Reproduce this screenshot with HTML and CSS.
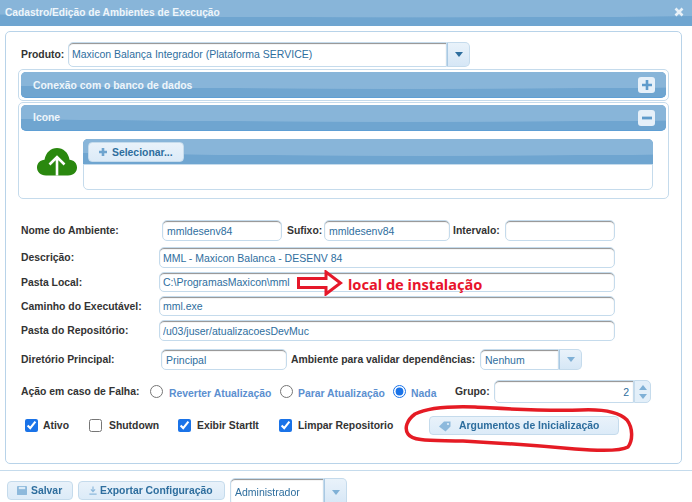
FILE: index.html
```html
<!DOCTYPE html>
<html lang="pt-BR">
<head>
<meta charset="utf-8">
<title>Cadastro/Edição de Ambientes de Execução</title>
<link rel="stylesheet" href="styles.css">
</head>
<body>
<div class="dialog">
  <header class="titlebar gloss">
    <span class="title">Cadastro/Edição de Ambientes de Execução</span>
    <svg class="close" width="10" height="10" viewBox="0 0 10 10"><path d="M1.5 1.5l7 7M8.5 1.5l-7 7" stroke="#e8f1f8" stroke-width="2.6"/></svg>
  </header>
  <main class="panel">
    <div class="row produto">
      <label class="lbl lbl-produto">Produto:</label>
      <div class="combo combo-produto">
        <input class="field" value="Maxicon Balança Integrador (Plataforma SERVICE)">
        <span class="combo-btn"><svg width="8" height="5" viewBox="0 0 8 5"><path d="M0 0h8L4 5z" fill="#2e6e9e"/></svg></span>
      </div>
    </div>

    <section class="accordion acc-closed">
      <div class="acc-head gloss">
        <span>Conexão com o banco de dados</span>
        <span class="acc-toggle"><svg width="10" height="10" viewBox="0 0 10 10"><path d="M5 0v10M0 5h10" stroke="#5f9bcb" stroke-width="2.6"/></svg></span>
      </div>
    </section>

    <section class="accordion acc-open">
      <div class="acc-head gloss">
        <span>Icone</span>
        <span class="acc-toggle"><svg width="10" height="10" viewBox="0 0 10 10"><path d="M0 5h10" stroke="#5f9bcb" stroke-width="2.8"/></svg></span>
      </div>
      <div class="upload-row">
        <svg class="cloud" width="42" height="29" viewBox="0 0 42 29"><path d="M10 28.500C4 28.500 1 24.500 1 20.500 1 16 4.500 13 8.500 12.800 9.500 5.500 15 1 21 1c6 0 11.500 4.500 12.500 11.800 4 .2 7.500 3.200 7.500 7.700 0 4-3 8-9 8z" fill="#2a880f"/><path d="M21 28.500V10.500M13.500 17.500L21 10l7.500 7.500" fill="none" stroke="#fff" stroke-width="2.600"/></svg>
        <div class="upload">
          <div class="upload-head gloss">
            <span class="btn btn-select"><svg width="10" height="10" viewBox="0 0 10 10"><path d="M5 1v8M1 5h8" stroke="#6ea4cf" stroke-width="2.6"/></svg>Selecionar...</span>
          </div>
          <div class="upload-body"></div>
        </div>
      </div>
    </section>

    <div class="row row-nome">
      <label class="lbl lbl-main">Nome do Ambiente:</label>
      <input class="field w-nome" value="mmldesenv84">
      <label class="lbl lbl-sufixo">Sufixo:</label>
      <input class="field w-sufixo" value="mmldesenv84">
      <label class="lbl lbl-intervalo">Intervalo:</label>
      <input class="field w-intervalo">
    </div>
    <div class="row row-desc">
      <label class="lbl lbl-wide">Descrição:</label>
      <input class="field w-full" value="MML - Maxicon Balanca - DESENV 84">
    </div>
    <div class="row row-thin">
      <label class="lbl lbl-wide">Pasta Local:</label>
      <input class="field w-full" value="C:\ProgramasMaxicon\mml">
    </div>
    <div class="row row-thin">
      <label class="lbl lbl-wide">Caminho do Executável:</label>
      <input class="field w-full" value="mml.exe">
    </div>
    <div class="row row-repo">
      <label class="lbl lbl-wide">Pasta do Repositório:</label>
      <input class="field w-full" value="/u03/juser/atualizacoesDevMuc">
    </div>
    <div class="row row-dir">
      <label class="lbl lbl-dir">Diretório Principal:</label>
      <input class="field w-dir" value="Principal">
      <label class="lbl lbl-dep">Ambiente para validar dependências:</label>
      <div class="combo combo-dep">
        <input class="field" value="Nenhum">
        <span class="combo-btn"><svg width="8" height="5" viewBox="0 0 8 5"><path d="M0 0h8L4 5z" fill="#7fb0d6"/></svg></span>
      </div>
    </div>
    <div class="row row-acao">
      <label class="lbl lbl-acao">Ação em caso de Falha:</label>
      <input class="radio" type="radio" name="acao">
      <span class="opt opt-rev">Reverter Atualização</span>
      <input class="radio" type="radio" name="acao">
      <span class="opt opt-par">Parar Atualização</span>
      <input class="radio" type="radio" name="acao" checked>
      <span class="opt opt-nada">Nada</span>
      <label class="lbl lbl-grupo">Grupo:</label>
      <div class="spinner">
        <input class="field num" value="2">
        <span class="spin-btns">
          <svg width="8" height="5" viewBox="0 0 8 5"><path d="M0 5h8L4 0z" fill="#7fb0d6"/></svg>
          <svg width="8" height="5" viewBox="0 0 8 5"><path d="M0 0h8L4 5z" fill="#7fb0d6"/></svg>
        </span>
      </div>
    </div>
    <div class="row row-checks">
      <input class="check c1" type="checkbox" checked><span class="lbl t1">Ativo</span>
      <input class="check c2" type="checkbox"><span class="lbl t2">Shutdown</span>
      <input class="check c3" type="checkbox" checked><span class="lbl t3">Exibir StartIt</span>
      <input class="check c4" type="checkbox" checked><span class="lbl t4">Limpar Repositorio</span>
      <span class="btn btn-args"><svg width="14" height="12" viewBox="0 0 14 12"><path d="M1 6.500L6 1.500h6.500v5L7.500 11.500z" fill="#8db9dc"/><circle cx="10" cy="4" r="1.100" fill="#e3effa"/></svg>Argumentos de Inicialização</span>
    </div>
  </main>
  <footer class="footer">
    <span class="btn btn-salvar"><svg width="10" height="11" viewBox="0 0 11 11"><path d="M0 1.500Q0 .5 1 .5h9q1 0 1 1v8q0 1-1 1H1q-1 0-1-1z" fill="#8db9dc"/><path d="M2 1.500h7v2.500H2z" fill="#dcebf7"/></svg>Salvar</span>
    <span class="btn btn-export"><svg width="10" height="11" viewBox="0 0 11 11"><path d="M5.500 1v5M3.200 4.300l2.300 2.500 2.300-2.500M1.500 9.500h8" fill="none" stroke="#8db9dc" stroke-width="1.300"/></svg>Exportar Configuração</span>
    <div class="combo combo-adm">
      <input class="field" value="Administrador">
      <span class="combo-btn"><svg width="8" height="5" viewBox="0 0 8 5"><path d="M0 0h8L4 5z" fill="#7fb0d6"/></svg></span>
    </div>
  </footer>

  <svg class="note-arrow" width="46" height="26" viewBox="0 0 46 26"><path d="M1.500 8.500H29V2L43.500 13 29 24V17.500H1.500z" fill="#fff" stroke="#e5182a" stroke-width="3"/></svg>
  <span class="note-text">local de instalação</span>
  <svg class="note-ring" width="240" height="50" viewBox="0 0 240 50"><path d="M7 30C3 24 6 16 14 10 24 5 44 2 74 3 110 5 134 7 180 6 204 5 218 8 226 16 232 24 232 36 227 43 220 47 200 47 174 45 140 42 100 39 62 37 34 36 12 38 7 30z" fill="none" stroke="#e51b24" stroke-width="3.500"/></svg>
</div>
</body>
</html>
```

FILE: styles.css
```css
* { box-sizing: border-box; }
html, body { margin: 0; padding: 0; }
body {
  width: 692px;
  height: 502px;
  overflow: hidden;
  background: #fff;
  font-family: "Liberation Sans", Arial, sans-serif;
  font-size: 10.400px;
  color: #222;
}
.dialog {
  position: relative;
  width: 692px;
  height: 502px;
  overflow: hidden;
  display: flex;
  flex-direction: column;
  filter: blur(.3px);
}
.gloss {
  background: radial-gradient(ellipse 110% 68% at 60% 0, #88b5d9 97%, #6fa5d0 100%);
  background-color: #6fa5d0;
}
.titlebar {
  flex: none;
  height: 26px;
  display: flex;
  align-items: center;
  justify-content: space-between;
  padding: 0 8px 2px 5px;
  color: #eef5fb;
  font-weight: bold;
  font-size: 10.200px;
}
.panel {
  flex: none;
  width: 677px;
  height: 433px;
  margin: 5px 0 0 5px;
  padding: 10px 0 0 15px;
  border: 1px solid #b8d3e9;
  border-radius: 5px;
  background: #fff;
}
.row { display: flex; align-items: center; }
.lbl { font-weight: bold; font-size: 10.400px; color: #333; white-space: nowrap; }
.field {
  display: block;
  height: 100%;
  min-width: 0;
  margin: 0;
  padding: 0 4px;
  border: 1px solid #c5dbec;
  border-radius: 5px;
  outline: none;
  background: #fff;
  box-shadow: inset 0 1.500px 1px -0.500px #8f8f8f;
  font: 10.500px "Liberation Sans", Arial, sans-serif;
  color: #2e6e9e;
}
.combo { display: flex; }
.combo .field { flex: 1; border-radius: 5px 0 0 5px; }
.combo-btn {
  flex: none;
  display: flex;
  align-items: center;
  justify-content: center;
  width: 23px;
  border: 1px solid #c5dbec;
  border-left: 1px solid #a9c9e3;
  border-radius: 0 5px 5px 0;
  background: linear-gradient(#e9f2fa, #d6e7f6);
}
.produto { height: 24px; }
.lbl-produto { width: 47px; }
.combo-produto { width: 402px; height: 25px; }
.combo-produto .field { padding-left: 3px; }
.accordion {
  width: 651px;
  margin-left: -3px;
  padding: 2px;
  border: 1px solid #c5dbec;
  border-radius: 5px;
}
.acc-closed { height: 32px; margin-top: 3px; }
.acc-closed .acc-head { padding-top: 1px; }
.acc-open { height: 97px; margin-top: 1px; }
.acc-head {
  height: 26px;
  display: flex;
  align-items: center;
  justify-content: space-between;
  padding: 0 11px 0 12px;
  border-bottom: 1px solid #5f9fd4;
  border-radius: 5px;
  color: #eef5fb;
  font-weight: bold;
  font-size: 10.400px;
}
.acc-toggle {
  width: 17px;
  height: 16px;
  display: flex;
  align-items: center;
  justify-content: center;
  border-radius: 3px;
  background: #e6f0f9;
}
.upload-row { display: flex; margin: 8px 0 0 15px; }
.cloud { flex: none; margin-top: 8px; }
.upload {
  width: 570px;
  height: 51px;
  margin-left: 5px;
  border: 1px solid #c5dbec;
  border-radius: 5px;
}
.upload-head {
  height: 26px;
  padding: 3px 0 0 5px;
  margin: -1px -1px 0;
  border-radius: 5px 5px 0 0;
  border-bottom: 1px solid #c5dbec;
}
.btn {
  display: inline-flex;
  align-items: center;
  border: 1px solid #c5dbec;
  border-radius: 4px;
  background: linear-gradient(#e9f2fa, #dcebf8);
  color: #2e6e9e;
  font-weight: bold;
  font-size: 10.400px;
  white-space: nowrap;
}
.btn-select { width: 96px; height: 20px; padding-left: 9px; gap: 4px; }
.row-nome { height: 21px; margin-top: 21px; }
.lbl-main { width: 141px; }
.w-nome { width: 120px; }
.lbl-sufixo { width: 42px; padding-left: 5px; }
.w-sufixo { width: 126px; }
.lbl-intervalo { width: 55px; padding-left: 3px; }
.w-intervalo { width: 110px; }
.lbl-wide { width: 138px; }
.w-full { width: 456px; padding-left: 3px; }
.row-desc { height: 21px; margin-top: 6px; }
.row-thin { height: 20px; margin-top: 4px; }
.row-repo { height: 21px; margin-top: 4px; }
.row-dir { height: 21px; margin-top: 8px; }
.lbl-dir { width: 140px; }
.w-dir { width: 126px; }
.lbl-dep { width: 193px; padding-left: 4px; }
.combo-dep { width: 102px; height: 21px; }
.row-acao { height: 23px; margin-top: 10px; }
.lbl-acao { width: 129px; }
.radio { width: 13px; height: 13px; margin: 0; accent-color: #1a73e8; flex: none; }
.opt { color: #5b8fd0; font-weight: bold; font-size: 10.400px; white-space: nowrap; padding-top: 3px; }
.opt-rev { width: 111px; margin-left: 6px; }
.opt-par { width: 95px; margin-left: 5px; }
.opt-nada { width: 44px; margin-left: 5px; }
.lbl-grupo { width: 39px; }
.spinner { display: flex; width: 157px; height: 23px; }
.num { flex: 1; text-align: right; border-radius: 5px 0 0 5px; }
.spin-btns {
  flex: none;
  width: 17px;
  display: flex;
  flex-direction: column;
  align-items: center;
  justify-content: center;
  gap: 4px;
  border: 1px solid #c5dbec;
  border-radius: 0 5px 5px 0;
  background: #e3eff9;
}
.row-checks { height: 19px; margin-top: 13px; }
.check { width: 13px; height: 13px; margin: 0; accent-color: #1a73e8; flex: none; }
.c1 { margin-left: 4px; }
.t1 { width: 46px; margin-left: 5px; }
.t2 { width: 69px; margin-left: 7px; }
.t3 { width: 82px; margin-left: 6px; }
.t4 { width: 127px; margin-left: 6px; }
.btn-args { flex: none; width: 190px; height: 19px; margin-left: 4px; padding-left: 8px; gap: 7px; }
.footer {
  flex: none;
  height: 32px;
  margin-top: 6px;
  border-top: 1px solid #c5dbec;
  display: flex;
  padding: 10px 0 0 7px;
}
.footer .btn { height: 19px; }
.btn-salvar { width: 66px; padding-left: 9px; gap: 4px; }
.btn-export { width: 147px; margin-left: 5px; padding-left: 9px; gap: 2px; }
.combo-adm { width: 117px; height: 28px; margin: -3px 0 0 5px; }
.note-arrow { position: absolute; left: 297px; top: 270px; }
.note-text {
  position: absolute;
  left: 348px;
  top: 274px;
  font-family: "Noto Sans", sans-serif;
  font-weight: bold;
  font-size: 14.600px;
  line-height: 20px;
  color: #e8132b;
  white-space: nowrap;
}
.note-ring { position: absolute; left: 401px; top: 404px; }
```
